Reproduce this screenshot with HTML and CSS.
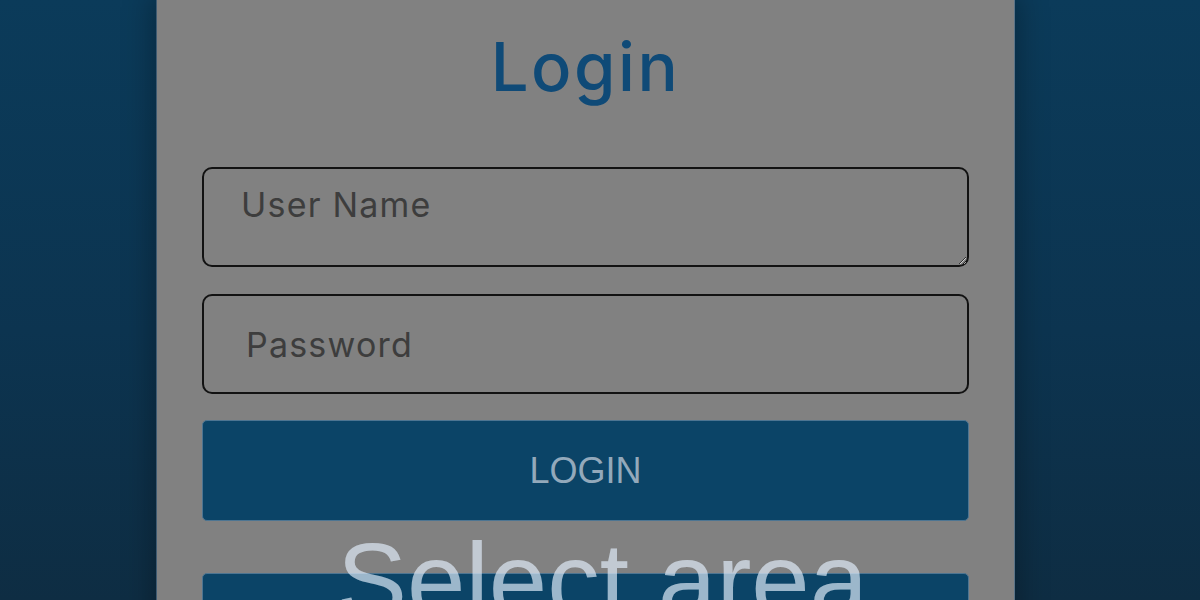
FILE: index.html
```html
<!DOCTYPE html>
<html lang="en">
<head>
<meta charset="utf-8">
<title>Login</title>
<link rel="stylesheet" href="styles.css">
</head>
<body>
<div class="page">
  <main class="card">
    <h1 class="title">Login</h1>
    <form class="form">
      <textarea class="field field-area" placeholder="User Name"></textarea>
      <input class="field field-input" type="password" placeholder="Password">
      <button type="button" class="btn btn-login">LOGIN</button>
      <button type="button" class="btn btn-second"></button>
    </form>
  </main>
</div>
<div class="select-label">Select area</div>
</body>
</html>
```

FILE: styles.css
```css
html, body {
  margin: 0;
  padding: 0;
  height: 600px;
  overflow: hidden;
}

body {
  background: linear-gradient(180deg, #0b3b5a 0%, #0c3450 55%, #0e2d43 100%);
  font-family: Inter, "Liberation Sans", sans-serif;
  position: relative;
}

.page {
  display: flex;
  padding-left: 156px;
  height: 600px;
}

.card {
  width: 859px;
  box-sizing: border-box;
  height: 700px;
  background: #818181;
  padding: 33px 45px 0 45px;
  box-shadow: 0 0 26px 6px rgba(0, 0, 0, 0.25);
  border-left: 1px solid #3f5b72;
  border-right: 1px solid #5b7488;
}

.title {
  margin: 0 0 67px 0;
  text-align: center;
  font-family: Inter, sans-serif;
  font-weight: 500;
  font-size: 67px;
  line-height: 67px;
  letter-spacing: 2.5px;
  color: #0f4a77;
}

.form {
  display: flex;
  flex-direction: column;
}

.field {
  box-sizing: border-box;
  width: 767px;
  height: 100px;
  border: 2px solid #121212;
  border-radius: 10px;
  background: transparent;
  font-family: Inter, sans-serif;
  font-size: 34px;
  letter-spacing: 1.2px;
  color: #333;
  outline: none;
  margin: 0;
}

.field::placeholder {
  color: #3d3d3d;
  opacity: 1;
}

.field-area {
  padding: 16px 36px 0 37px;
  line-height: 1.2;
  resize: vertical;
  margin-bottom: 27px;
}

.field-input {
  padding: 0 41px 0 42px;
  margin-bottom: 26px;
}

.btn {
  box-sizing: border-box;
  width: 767px;
  height: 101px;
  border: 1px solid #4d7592;
  border-radius: 5px;
  background: #0b4467;
  color: #93a9bb;
  font-family: "Liberation Sans", Arial, sans-serif;
  font-size: 36px;
  padding: 0;
  margin: 0;
}

.btn-login {
  margin-bottom: 52px;
}

.select-label {
  position: absolute;
  left: 337px;
  top: 528px;
  font-family: "Liberation Sans", Arial, sans-serif;
  font-size: 105px;
  line-height: 1;
  color: rgba(225, 238, 250, 0.68);
  white-space: nowrap;
}
```
